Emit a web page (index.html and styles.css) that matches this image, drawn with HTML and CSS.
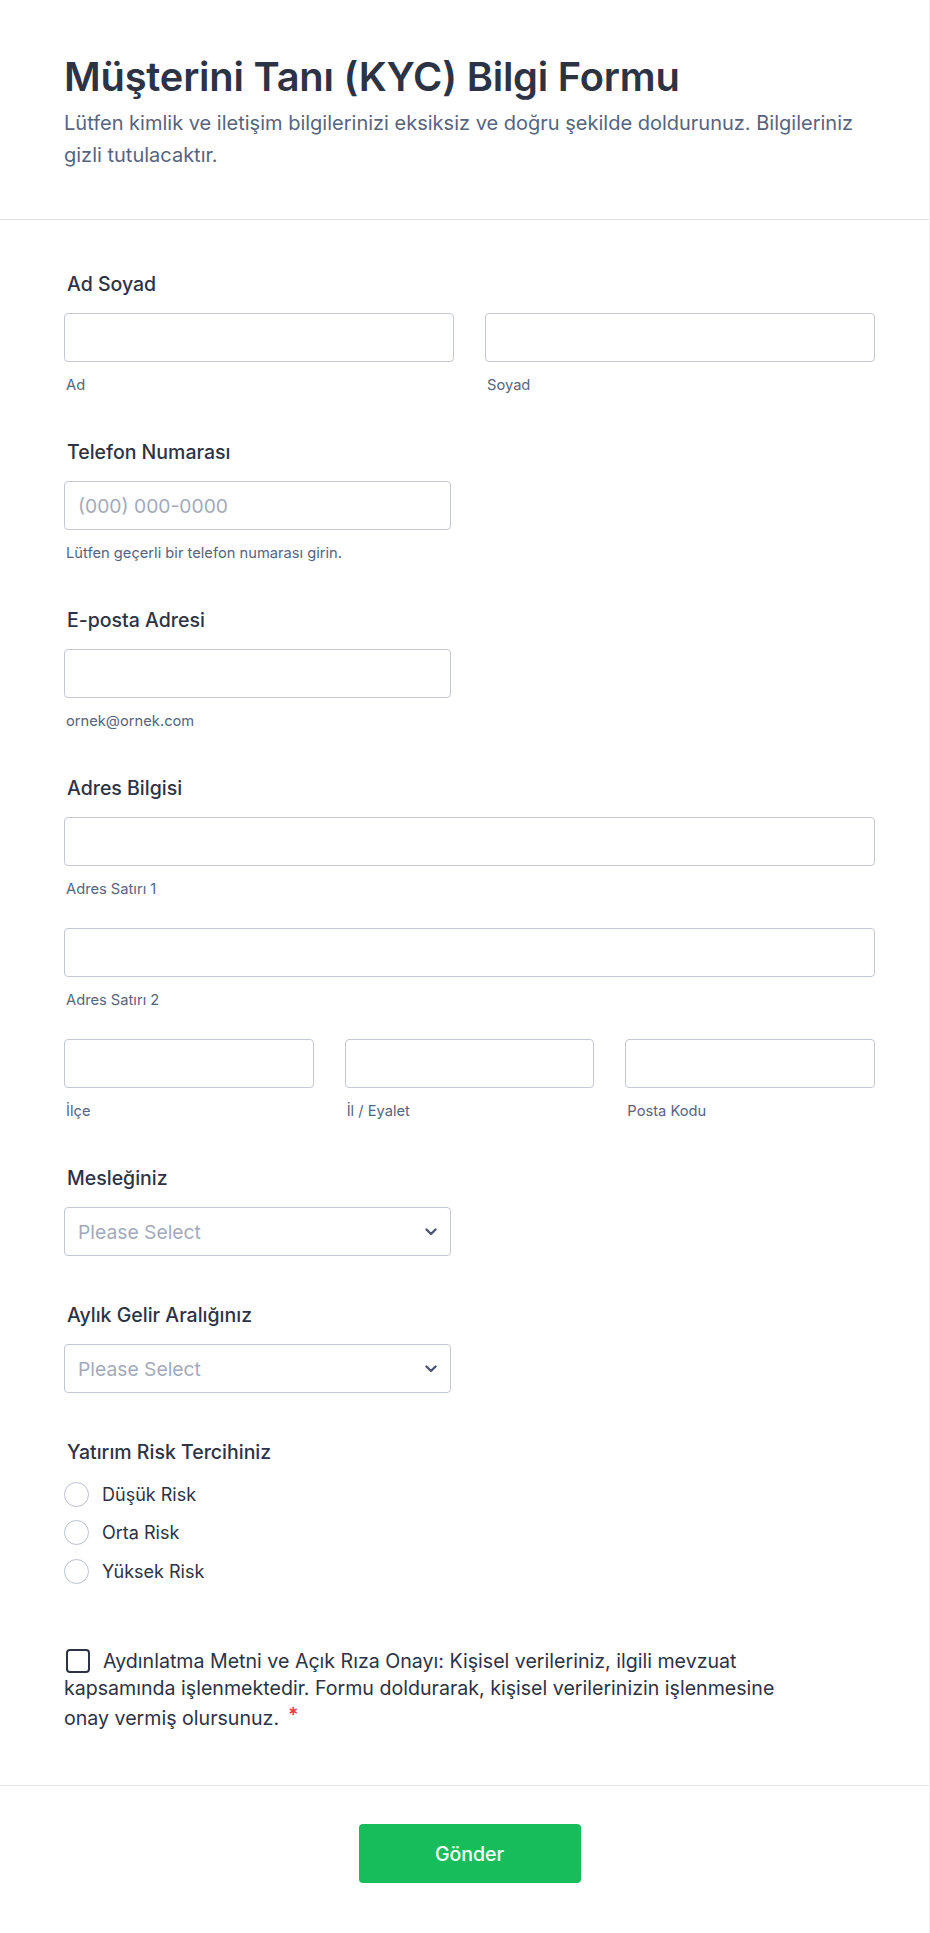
FILE: index.html
```html
<!DOCTYPE html>
<html lang="tr">
<head>
<meta charset="utf-8">
<title>Müşterini Tanı (KYC) Bilgi Formu</title>
<link rel="stylesheet" href="styles.css">
</head>
<body>
<div class="page">
  <header class="form-header">
    <h1 class="form-title">Müşterini Tanı (KYC) Bilgi Formu</h1>
    <p class="form-subtitle">Lütfen kimlik ve iletişim bilgilerinizi eksiksiz ve doğru şekilde doldurunuz. Bilgileriniz gizli tutulacaktır.</p>
  </header>

  <form class="form-body">
    <div class="field">
      <div class="label">Ad Soyad</div>
      <div class="row two">
        <div class="col"><input class="input" type="text"><div class="sublabel">Ad</div></div>
        <div class="col"><input class="input" type="text"><div class="sublabel">Soyad</div></div>
      </div>
    </div>

    <div class="field">
      <div class="label">Telefon Numarası</div>
      <input class="input half" type="text" placeholder="(000) 000-0000">
      <div class="sublabel">Lütfen geçerli bir telefon numarası girin.</div>
    </div>

    <div class="field">
      <div class="label">E-posta Adresi</div>
      <input class="input half" type="text">
      <div class="sublabel">ornek@ornek.com</div>
    </div>

    <div class="field">
      <div class="label">Adres Bilgisi</div>
      <div class="addr-line"><input class="input" type="text"><div class="sublabel">Adres Satırı 1</div></div>
      <div class="addr-line"><input class="input" type="text"><div class="sublabel">Adres Satırı 2</div></div>
      <div class="row three">
        <div class="col"><input class="input" type="text"><div class="sublabel">İlçe</div></div>
        <div class="col"><input class="input" type="text"><div class="sublabel">İl / Eyalet</div></div>
        <div class="col"><input class="input" type="text"><div class="sublabel">Posta Kodu</div></div>
      </div>
    </div>

    <div class="field">
      <div class="label">Mesleğiniz</div>
      <div class="select half">
        <span class="select-text">Please Select</span>
        <svg class="chevron" width="12" height="8" viewBox="0 0 12 8"><path d="M1.5 1.5 L6 6 L10.5 1.5" fill="none" stroke="#4b5673" stroke-width="2.4" stroke-linecap="round" stroke-linejoin="round"/></svg>
      </div>
    </div>

    <div class="field">
      <div class="label">Aylık Gelir Aralığınız</div>
      <div class="select half">
        <span class="select-text">Please Select</span>
        <svg class="chevron" width="12" height="8" viewBox="0 0 12 8"><path d="M1.5 1.5 L6 6 L10.5 1.5" fill="none" stroke="#4b5673" stroke-width="2.4" stroke-linecap="round" stroke-linejoin="round"/></svg>
      </div>
    </div>

    <div class="field">
      <div class="label">Yatırım Risk Tercihiniz</div>
      <div class="radios">
        <div class="radio"><span class="circle"></span><span class="radio-text">Düşük Risk</span></div>
        <div class="radio"><span class="circle"></span><span class="radio-text">Orta Risk</span></div>
        <div class="radio"><span class="circle"></span><span class="radio-text">Yüksek Risk</span></div>
      </div>
    </div>

    <div class="consent">
      <p class="consent-text"><span class="box"></span>Aydınlatma Metni ve Açık Rıza Onayı: Kişisel verileriniz, ilgili mevzuat kapsamında işlenmektedir. Formu doldurarak, kişisel verilerinizin işlenmesine onay vermiş olursunuz.<span class="req">*</span></p>
    </div>
  </form>

  <footer class="form-footer">
    <button class="submit" type="button">Gönder</button>
  </footer>
</div>
</body>
</html>
```

FILE: styles.css
```css
* { box-sizing: border-box; }

html, body {
  margin: 0;
  padding: 0;
  background: #ffffff;
}

body {
  font-family: Inter, "Noto Sans", "Liberation Sans", sans-serif;
  color: #2c3345;
}

.page {
  width: 930px;
  min-height: 1933px;
  border-right: 1px solid #eef0f6;
  border-bottom: 1px solid #eef0f6;
}

.form-header {
  padding: 54px 54px 48px 64px;
  border-bottom: 1px solid #dfe2ea;
}

.form-title {
  margin: 0;
  font-size: 39.8px;
  line-height: 46px;
  font-weight: 600;
  color: #2c3345;
  letter-spacing: -0.2px;
}

.form-subtitle {
  margin: 7px 0 0;
  font-size: 20px;
  line-height: 32px;
  color: #57647e;
}

.form-body {
  padding: 52px 54px 0 64px;
  display: flex;
  flex-direction: column;
  gap: 47px;
}

.label {
  font-size: 19.5px;
  line-height: 24px;
  font-weight: 500;
  color: #2c3345;
  padding-left: 3px;
  margin-bottom: 17px;
}

.input {
  display: block;
  width: 100%;
  height: 49px;
  border: 1px solid #c3c8d4;
  border-radius: 4px;
  background: #fff;
  padding: 0 13px;
  font-family: inherit;
  font-size: 19.3px;
  color: #2c3345;
  outline: none;
}

.input::placeholder {
  color: #a3aabb;
}

.half {
  width: 387px;
}

.sublabel {
  margin-top: 15px;
  padding-left: 2px;
  font-size: 14.7px;
  line-height: 16px;
  color: #57647e;
}

.row {
  display: grid;
  gap: 31px;
}

.row.two { grid-template-columns: 1fr 1fr; }
.row.three { grid-template-columns: 1fr 1fr 1fr; }

.addr-line {
  margin-bottom: 31px;
}

.select {
  height: 49px;
  border: 1px solid #c3c8d4;
  border-radius: 4px;
  display: flex;
  align-items: center;
  justify-content: space-between;
  padding: 0 13px 0 13px;
}

.select-text {
  font-size: 19.3px;
  color: #a3aabb;
}

.chevron {
  display: block;
}

.radios {
  display: flex;
  flex-direction: column;
  gap: 14.5px;
  padding-top: 1px;
}

.radio {
  display: flex;
  align-items: center;
  gap: 13px;
  height: 24px;
}

.circle {
  width: 25px;
  height: 25px;
  border: 1px solid #b9bfcc;
  border-radius: 50%;
  flex: none;
}

.radio-text {
  font-size: 18px;
  color: #2c3345;
}

.consent {
  padding-top: 18px;
  padding-bottom: 53px;
}

.consent-text {
  margin: 0;
  max-width: 745px;
  font-size: 19.6px;
  line-height: 27px;
  color: #2c3345;
}

.box {
  display: inline-block;
  width: 24px;
  height: 24px;
  border: 2px solid #2c3345;
  border-radius: 4px;
  vertical-align: -5px;
  margin-left: 2px;
  margin-right: 13px;
}

.req {
  color: #f23a3c;
  font-weight: 600;
  margin-left: 9px;
  vertical-align: 3px;
}

.form-footer {
  border-top: 1px solid #e3e6ee;
  padding: 38px 54px 50px 64px;
  display: flex;
  justify-content: center;
}

.submit {
  width: 222px;
  height: 59px;
  border: none;
  border-radius: 4px;
  background: #18bd5b;
  color: #ffffff;
  font-family: inherit;
  font-size: 19.5px;
  font-weight: 500;
}
```
